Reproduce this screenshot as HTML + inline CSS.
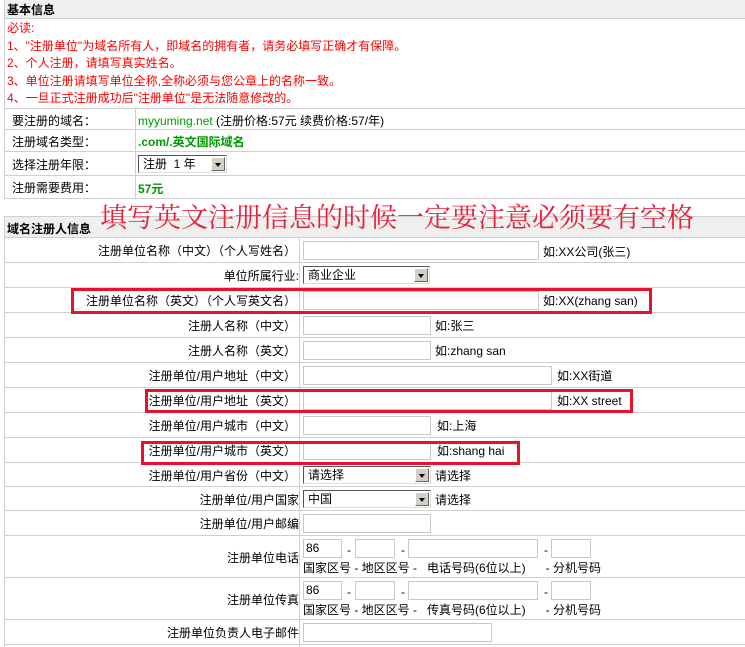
<!DOCTYPE html>
<html><head><meta charset="utf-8"><style>
*{margin:0;padding:0;box-sizing:border-box}
body{width:745px;height:647px;background:#fff;position:relative;overflow:hidden;font-family:"Liberation Sans","Noto Sans CJK SC",sans-serif;font-size:12px;color:#000}
.a{position:absolute;white-space:nowrap}
.hl{position:absolute;height:1px;background:#cfcfcf}
.vl{position:absolute;width:1px;background:#cfcfcf}
.in{position:absolute;height:19px;border:1px solid #c8c8c8;background:#fff;font-size:12px;padding:2px 2px;line-height:13px}
.sel{position:absolute;height:18px;border:1px solid #555;border-right-color:#ddd;border-bottom-color:#ddd;background:#fff;padding-left:4px;line-height:16px}
.sel b{position:absolute;right:1px;top:1px;width:14px;height:14px;background:#d4d0c8;border:1px solid #fff;border-right-color:#666;border-bottom-color:#666}
.sel b:after{content:"";position:absolute;left:3px;top:5px;border-left:3px solid transparent;border-right:3px solid transparent;border-top:4px solid #000}
.lb{position:absolute;right:449px;text-align:right;white-space:nowrap}
.red{position:absolute;border:3px solid #e8102a}
.r{color:#f00}
</style></head><body>
<div class="a" style="left:4px;top:0;width:741px;height:18px;background:#efefef"></div>
<div class="a" style="left:7px;top:1px;font-weight:bold">基本信息</div>
<div class="hl" style="left:4px;top:18px;width:741px"></div>
<div class="vl" style="left:4px;top:0;height:199px"></div>
<div class="a r" style="left:7px;top:20px;line-height:17.5px">必读:<br>1、"注册单位"为域名所有人，即域名的拥有者，请务必填写正确才有保障。<br>2、个人注册，请填写真实姓名。<br>3、单位注册请填写单位全称,全称必须与您公章上的名称一致。<br>4、一旦正式注册成功后"注册单位"是无法随意修改的。</div>
<div class="hl" style="left:4px;top:108px;width:741px"></div>
<div class="hl" style="left:4px;top:129px;width:741px"></div>
<div class="hl" style="left:4px;top:151px;width:741px"></div>
<div class="hl" style="left:4px;top:175px;width:741px"></div>
<div class="hl" style="left:4px;top:198px;width:741px"></div>
<div class="vl" style="left:135px;top:108px;height:91px"></div>
<div class="a" style="left:12px;top:112px">要注册的域名：</div>
<div class="a" style="left:12px;top:133px">注册域名类型：</div>
<div class="a" style="left:12px;top:156px">选择注册年限：</div>
<div class="a" style="left:12px;top:179px">注册需要费用：</div>
<div class="a" style="left:138px;top:112px"><span style="color:#090">myyuming.net</span> (注册价格:57元 续费价格:57/年)</div>
<div class="a" style="left:138px;top:133px;color:#090;font-weight:bold">.com/.英文国际域名</div>
<div class="sel" style="left:138px;top:155px;width:89px;height:18px">注册 &nbsp;1 年<b></b></div>
<div class="a" style="left:138px;top:180px;color:#090;font-weight:bold">57元</div>
<div class="a" style="left:4px;top:216px;width:741px;height:21px;background:#efefef;border-top:1px solid #cfcfcf"></div>
<div class="a" style="left:7px;top:220px;font-weight:bold">域名注册人信息</div>
<div class="a" style="left:100px;top:196px;font-family:'Liberation Serif','Noto Serif CJK SC',serif;font-size:27px;color:#e8203a">填写英文注册信息的时候一定要注意必须要有空格</div>
<div class="vl" style="left:4px;top:216px;height:431px"></div>
<div class="vl" style="left:299px;top:238px;height:409px"></div>
<div class="hl" style="left:4px;top:237px;width:741px"></div>
<div class="hl" style="left:4px;top:262px;width:741px"></div>
<div class="hl" style="left:4px;top:287px;width:741px"></div>
<div class="hl" style="left:4px;top:312px;width:741px"></div>
<div class="hl" style="left:4px;top:337px;width:741px"></div>
<div class="hl" style="left:4px;top:362px;width:741px"></div>
<div class="hl" style="left:4px;top:387px;width:741px"></div>
<div class="hl" style="left:4px;top:412px;width:741px"></div>
<div class="hl" style="left:4px;top:437px;width:741px"></div>
<div class="hl" style="left:4px;top:462px;width:741px"></div>
<div class="hl" style="left:4px;top:486px;width:741px"></div>
<div class="hl" style="left:4px;top:510px;width:741px"></div>
<div class="hl" style="left:4px;top:535px;width:741px"></div>
<div class="hl" style="left:4px;top:577px;width:741px"></div>
<div class="hl" style="left:4px;top:619px;width:741px"></div>
<div class="hl" style="left:4px;top:644px;width:741px"></div>

<div class="lb" style="top:242px">注册单位名称（中文）（个人写姓名）</div>
<div class="in" style="left:303px;top:241px;width:236px"></div><div class="a" style="left:543px;top:243px">如:XX公司(张三)</div>
<div class="lb" style="top:267px;right:446px">单位所属行业:</div>
<div class="sel" style="left:303px;top:266px;width:127px">商业企业<b></b></div>
<div class="lb" style="top:292px">注册单位名称（英文）（个人写英文名）</div>
<div class="in" style="left:303px;top:291px;width:236px"></div><div class="a" style="left:543px;top:292px">如:XX(zhang san)</div>
<div class="lb" style="top:317px">注册人名称（中文）</div>
<div class="in" style="left:303px;top:316px;width:128px"></div><div class="a" style="left:435px;top:317px">如:张三</div>
<div class="lb" style="top:342px">注册人名称（英文）</div>
<div class="in" style="left:303px;top:341px;width:128px"></div><div class="a" style="left:435px;top:342px">如:zhang san</div>
<div class="lb" style="top:367px">注册单位/用户地址（中文）</div>
<div class="in" style="left:303px;top:366px;width:249px"></div><div class="a" style="left:557px;top:367px">如:XX街道</div>
<div class="lb" style="top:392px">注册单位/用户地址（英文）</div>
<div class="in" style="left:303px;top:391px;width:249px"></div><div class="a" style="left:557px;top:392px">如:XX street</div>
<div class="lb" style="top:417px">注册单位/用户城市（中文）</div>
<div class="in" style="left:303px;top:416px;width:128px"></div><div class="a" style="left:437px;top:417px">如:上海</div>
<div class="lb" style="top:442px">注册单位/用户城市（英文）</div>
<div class="in" style="left:303px;top:441px;width:128px"></div><div class="a" style="left:437px;top:442px">如:shang hai</div>
<div class="lb" style="top:467px">注册单位/用户省份（中文）</div>
<div class="sel" style="left:303px;top:466px;width:128px">请选择<b></b></div><div class="a" style="left:435px;top:467px">请选择</div>
<div class="lb" style="top:491px;right:446px">注册单位/用户国家</div>
<div class="sel" style="left:303px;top:490px;width:128px">中国<b></b></div><div class="a" style="left:435px;top:491px">请选择</div>
<div class="lb" style="top:515px;right:446px">注册单位/用户邮编</div>
<div class="in" style="left:303px;top:514px;width:128px"></div>
<div class="lb" style="top:549px;right:446px">注册单位电话</div>
<div class="in" style="left:303px;top:539px;width:39px">86</div><div class="a" style="left:347px;top:543px">-</div>
<div class="in" style="left:355px;top:539px;width:40px"></div><div class="a" style="left:401px;top:543px">-</div>
<div class="in" style="left:408px;top:539px;width:130px"></div><div class="a" style="left:544px;top:543px">-</div>
<div class="in" style="left:551px;top:539px;width:40px"></div>
<div class="a" style="left:303px;top:559px">国家区号 - 地区区号 - &nbsp;&nbsp;电话号码(6位以上) &nbsp;&nbsp;&nbsp;&nbsp;&nbsp;- 分机号码</div>
<div class="lb" style="top:591px;right:446px">注册单位传真</div>
<div class="in" style="left:303px;top:581px;width:39px">86</div><div class="a" style="left:347px;top:585px">-</div>
<div class="in" style="left:355px;top:581px;width:40px"></div><div class="a" style="left:401px;top:585px">-</div>
<div class="in" style="left:408px;top:581px;width:130px"></div><div class="a" style="left:544px;top:585px">-</div>
<div class="in" style="left:551px;top:581px;width:40px"></div>
<div class="a" style="left:303px;top:601px">国家区号 - 地区区号 - &nbsp;&nbsp;传真号码(6位以上) &nbsp;&nbsp;&nbsp;&nbsp;&nbsp;- 分机号码</div>
<div class="lb" style="top:624px;right:446px">注册单位负责人电子邮件</div>
<div class="in" style="left:303px;top:623px;width:189px"></div>

<div class="red" style="left:71px;top:288px;width:581px;height:26px"></div>
<div class="red" style="left:145px;top:389px;width:488px;height:24px"></div>
<div class="red" style="left:141px;top:441px;width:379px;height:24px"></div>
</body></html>
